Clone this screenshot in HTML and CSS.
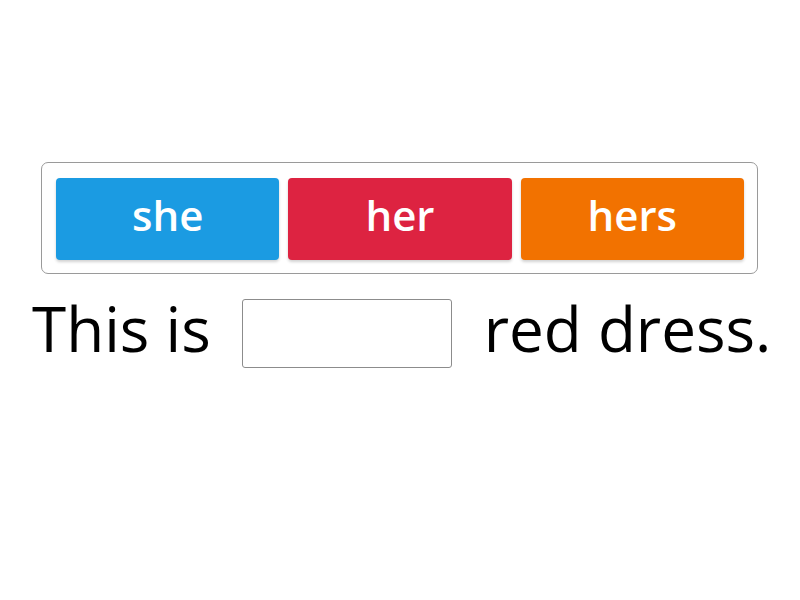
FILE: index.html
```html
<!DOCTYPE html>
<html lang="en">
<head>
<meta charset="UTF-8" />
<meta name="viewport" content="width=device-width, initial-scale=1" />
<title>Missing word</title>
<link rel="stylesheet" href="styles.css">
</head>
<body>
    <div class="game">
        <div class="word-bank">
            <button class="word word-blue">she</button>
            <button class="word word-red">her</button>
            <button class="word word-orange">hers</button>
        </div>

        <div class="sentence">
            <span class="part">This is</span>
            <span class="blank"></span>
            <span class="part">red dress.</span>
        </div>
    </div>
</body>
</html>
```

FILE: styles.css
```css
body {
    font-family: "Open Sans", "Noto Sans", sans-serif;
    background: white;
    color: black;
    margin: 0;
}

.game {
    padding-top: 162px;
}

.word-bank {
    display: flex;
    gap: 9px;
    margin-left: 41px;
    width: 717px;
    box-sizing: border-box;
    padding: 15px 13px 13px 14px;
    border: 1px solid #9a9a9a;
    border-radius: 7px;
}

.word {
    flex: 1;
    height: 82px;
    border: none;
    border-radius: 4px;
    font-family: "Open Sans", "Noto Sans", sans-serif;
    font-weight: 600;
    font-size: 42px;
    color: white;
    padding: 0 0 10px 0;
    box-shadow: 0 2px 3px rgba(0, 0, 0, 0.18);
    cursor: pointer;
}

.word-blue {
    background: #1b9be2;
}

.word-red {
    background: #dd2341;
}

.word-orange {
    background: #f27200;
}

.sentence {
    display: flex;
    align-items: flex-start;
    margin-top: 17px;
    padding-left: 32px;
    font-size: 62px;
    line-height: 74px;
}

.blank {
    width: 208px;
    height: 67px;
    border: 1px solid #8c8c8c;
    border-radius: 3px;
    margin: 8px 32px 0 31px;
}
```
